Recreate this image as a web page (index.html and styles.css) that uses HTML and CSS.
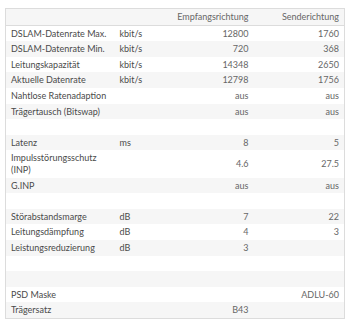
FILE: index.html
```html
<!DOCTYPE html>
<html lang="de">
<head>
<meta charset="utf-8">
<link rel="stylesheet" href="styles.css">
</head>
<body>
<table class="dsl">
  <colgroup>
    <col class="c-label">
    <col class="c-unit">
    <col class="c-down">
    <col class="c-up">
  </colgroup>
  <thead>
    <tr><th></th><th></th><th class="num">Empfangsrichtung</th><th class="num">Senderichtung</th></tr>
  </thead>
  <tbody>
    <tr><td>DSLAM-Datenrate Max.</td><td>kbit/s</td><td class="num">12800</td><td class="num">1760</td></tr>
    <tr><td>DSLAM-Datenrate Min.</td><td>kbit/s</td><td class="num">720</td><td class="num">368</td></tr>
    <tr><td>Leitungskapazität</td><td>kbit/s</td><td class="num">14348</td><td class="num">2650</td></tr>
    <tr><td>Aktuelle Datenrate</td><td>kbit/s</td><td class="num">12798</td><td class="num">1756</td></tr>
    <tr><td>Nahtlose Ratenadaption</td><td></td><td class="num">aus</td><td class="num">aus</td></tr>
    <tr><td>Trägertausch (Bitswap)</td><td></td><td class="num">aus</td><td class="num">aus</td></tr>
    <tr><td>&nbsp;</td><td></td><td></td><td></td></tr>
    <tr><td>Latenz</td><td>ms</td><td class="num">8</td><td class="num">5</td></tr>
    <tr><td>Impulsstörungsschutz (INP)</td><td></td><td class="num">4.6</td><td class="num">27.5</td></tr>
    <tr><td>G.INP</td><td></td><td class="num">aus</td><td class="num">aus</td></tr>
    <tr><td>&nbsp;</td><td></td><td></td><td></td></tr>
    <tr><td>Störabstandsmarge</td><td>dB</td><td class="num">7</td><td class="num">22</td></tr>
    <tr><td>Leitungsdämpfung</td><td>dB</td><td class="num">4</td><td class="num">3</td></tr>
    <tr><td>Leistungsreduzierung</td><td>dB</td><td class="num">3</td><td class="num"></td></tr>
    <tr><td>&nbsp;</td><td></td><td></td><td></td></tr>
    <tr><td>&nbsp;</td><td></td><td></td><td></td></tr>
    <tr><td>PSD Maske</td><td></td><td class="num"></td><td class="num">ADLU-60</td></tr>
    <tr><td>Trägersatz</td><td></td><td class="num">B43</td><td class="num"></td></tr>
  </tbody>
</table>
</body>
</html>
```

FILE: styles.css
```css
html, body {
  margin: 0;
  background: #ffffff;
}
body {
  padding: 8px 0 0 5px;
  font-family: Lato, "Open Sans", sans-serif;
  font-size: 9px;
  color: #555555;
}
.dsl {
  width: 339px;
  table-layout: fixed;
  border-collapse: collapse;
  border: 1px solid #dcdcdc;
}
.c-label { width: 109px; }
.c-unit { width: 50px; }
.c-down { width: 89px; }
.c-up { width: 91px; }
.dsl th,
.dsl td {
  padding: 2px 5px 2px 5px;
  line-height: 11.6px;
  font-weight: normal;
  text-align: left;
  vertical-align: middle;
}
.dsl th {
  background: #f6f6f6;
  border-bottom: 1px solid #dcdcdc;
  color: #6a6a6a;
}
.dsl td {
  color: #4a4a4a;
}
.dsl .num {
  text-align: right;
  color: #666666;
}
.dsl tbody tr:nth-child(even) td {
  background: #f6f6f6;
}
```
